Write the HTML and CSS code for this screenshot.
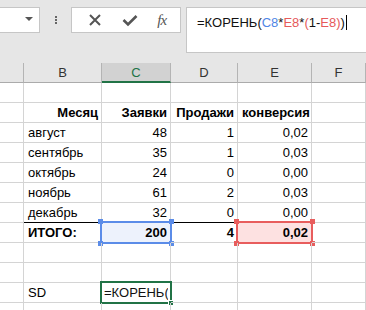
FILE: index.html
```html
<!DOCTYPE html>
<html lang="ru">
<head>
  <meta charset="UTF-8" />
  <title>Excel</title>
  <link rel="stylesheet" href="styles.css">
</head>
<body>
  <div class="toolbar">
    <div class="name-box"><span class="arrow"></span></div>
    <div class="dots"><i></i><i></i><i></i></div>
    <div class="fx-buttons">
      <svg width="14" height="14" viewBox="0 0 14 14"><path d="M2 2 L12 12 M12 2 L2 12" stroke="#555" stroke-width="2" fill="none"/></svg>
      <svg width="16" height="14" viewBox="0 0 16 14"><path d="M1.5 7 L6 11.5 L14.5 3" stroke="#555" stroke-width="2.6" fill="none"/></svg>
      <span class="fx">fx</span>
    </div>
    <div class="formula">=КОРЕНЬ(<span class="ref-c">C8</span>*<span class="ref-e">E8</span>*<span class="ref-e">(</span>1-<span class="ref-e">E8</span><span class="ref-e">)</span>)<span class="caret"></span></div>
  </div>

  <div class="sheet">
    <div class="hdr"></div>
    <div class="hdr">B</div>
    <div class="hdr active">C</div>
    <div class="hdr">D</div>
    <div class="hdr">E</div>
    <div class="hdr">F</div>

    <!-- 1 -->
    <div class="c"></div><div class="c"></div><div class="c"></div><div class="c"></div><div class="c"></div><div class="c"></div>
    <!-- 2 -->
    <div class="c"></div>
    <div class="c r b">Месяц</div>
    <div class="c r b">Заявки</div>
    <div class="c r b">Продажи</div>
    <div class="c r b">конверсия</div>
    <div class="c"></div>
    <!-- 3 -->
    <div class="c"></div><div class="c">август</div><div class="c r">48</div><div class="c r">1</div><div class="c r">0,02</div><div class="c"></div>
    <div class="c"></div><div class="c">сентябрь</div><div class="c r">35</div><div class="c r">1</div><div class="c r">0,03</div><div class="c"></div>
    <div class="c"></div><div class="c">октябрь</div><div class="c r">24</div><div class="c r">0</div><div class="c r">0,00</div><div class="c"></div>
    <div class="c"></div><div class="c">ноябрь</div><div class="c r">61</div><div class="c r">2</div><div class="c r">0,03</div><div class="c"></div>
    <div class="c"></div><div class="c line">декабрь</div><div class="c r line">32</div><div class="c r line">0</div><div class="c r line">0,00</div><div class="c"></div>
    <!-- 8 -->
    <div class="c"></div>
    <div class="c b">ИТОГО:</div>
    <div class="c r b sel-blue">200<span class="box"><i class="h tl"></i><i class="h tr"></i><i class="h bl"></i><i class="h br"></i></span></div>
    <div class="c r b">4</div>
    <div class="c r b sel-red">0,02<span class="box"><i class="h tl"></i><i class="h tr"></i><i class="h bl"></i><i class="h br"></i></span></div>
    <div class="c"></div>
    <!-- 9, 10 -->
    <div class="c"></div><div class="c"></div><div class="c"></div><div class="c"></div><div class="c"></div><div class="c"></div>
    <div class="c"></div><div class="c"></div><div class="c"></div><div class="c"></div><div class="c"></div><div class="c"></div>
    <!-- 11 -->
    <div class="c"></div>
    <div class="c">SD</div>
    <div class="c editing"><span class="clip">=КОРЕНЬ(<span class="ref-c">C8*E8</span></span><span class="box"><i class="fill"></i></span></div>
    <div class="c"></div><div class="c"></div><div class="c"></div>
    <!-- 12 -->
    <div class="c"></div><div class="c"></div><div class="c"></div><div class="c"></div><div class="c"></div><div class="c"></div>
  </div>
</body>
</html>
```

FILE: styles.css
```css
body {
  margin: 0;
  background-color: #fff;
  font-family: 'Liberation Sans', Arial, sans-serif;
  overflow: hidden;
}

/* Barra de fórmulas */
.toolbar {
  height: 63px;
  background-color: #e6e6e6;
  display: flex;
  align-items: flex-start;
  box-sizing: border-box;
}

.name-box {
  width: 40px;
  height: 26px;
  margin-top: 7px;
  box-sizing: border-box;
  background-color: #fff;
  border: 1px solid #c6c6c6;
  border-left: none;
  display: flex;
  justify-content: flex-end;
  align-items: center;
  padding-right: 6px;
}

.arrow {
  width: 0;
  height: 0;
  border-left: 4px solid transparent;
  border-right: 4px solid transparent;
  border-top: 4px solid #555;
  margin-top: -2px;
}

.dots {
  width: 31px;
  height: 26px;
  margin-top: 7px;
  display: flex;
  flex-direction: column;
  align-items: center;
  justify-content: center;
  gap: 1px;
}

.dots i {
  width: 2px;
  height: 2px;
  background-color: #666;
}

.fx-buttons {
  width: 110px;
  height: 26px;
  margin-top: 7px;
  box-sizing: border-box;
  background-color: #fff;
  border: 1px solid #c6c6c6;
  display: flex;
  align-items: center;
  justify-content: space-around;
  padding: 0 4px 0 6px;
}

.fx {
  font-family: 'Liberation Serif', serif;
  font-style: italic;
  font-size: 15px;
  color: #555;
  letter-spacing: -1px;
}

.formula {
  flex: 1;
  height: 46px;
  margin-top: 7px;
  margin-left: 5px;
  box-sizing: border-box;
  background-color: #fff;
  border: 1px solid #c6c6c6;
  border-right: none;
  padding: 5px 0 0 10px;
  font-size: 13px;
  line-height: 20px;
  color: #111;
  white-space: nowrap;
}

.ref-c { color: #4f86e6; }
.ref-e { color: #e65a5a; }

.caret {
  display: inline-block;
  width: 1px;
  height: 15px;
  background-color: #000;
  vertical-align: -3px;
  margin-left: 1px;
}

/* Planilha */
.sheet {
  display: grid;
  grid-template-columns: 24px 78px 69px 67px 74px 1fr;
  grid-auto-rows: 20px;
  font-size: 13px;
  color: #000;
}

.hdr {
  background-color: #e6e6e6;
  border-right: 1px solid #b4b4b4;
  border-bottom: 1px solid #ababab;
  box-sizing: border-box;
  text-align: center;
  line-height: 19px;
  font-size: 13px;
  color: #333;
}

.hdr.active {
  background-color: #d2d2d2;
  border-bottom: 2px solid #217346;
  color: #217346;
}

.c {
  position: relative;
  border-right: 1px solid #d4d4d4;
  border-bottom: 1px solid #d4d4d4;
  box-sizing: border-box;
  line-height: 19px;
  padding: 0 3px 0 4px;
  white-space: nowrap;
}

.r { text-align: right; }
.b { font-weight: bold; }

.line { border-bottom-color: #000; }

/* Seleções */
.sel-blue { background-color: #edf2fc; }
.sel-red { background-color: #fde1e1; }

.box {
  position: absolute;
  left: -2px;
  top: -2px;
  right: -2px;
  bottom: -2px;
  border: 2px solid #5b8ce8;
}

.sel-red .box { border-color: #e85d5d; }

.h {
  position: absolute;
  width: 5px;
  height: 5px;
  background-color: #5b8ce8;
}

.sel-red .h { background-color: #e85d5d; }

.tl { left: -4px; top: -4px; }
.tr { right: -4px; top: -4px; }
.bl { left: -4px; bottom: -4px; }
.br { right: -4px; bottom: -4px; }

/* Célula em edição */
.editing {
  padding: 0 2px 0 2px;
  color: #111;
}

.clip {
  display: block;
  overflow: hidden;
  font-size: 13px;
}

.editing .box {
  border-color: #217346;
}

.fill {
  position: absolute;
  right: -4px;
  bottom: -4px;
  width: 4px;
  height: 4px;
  background-color: #217346;
  border: 1px solid #fff;
}
```
